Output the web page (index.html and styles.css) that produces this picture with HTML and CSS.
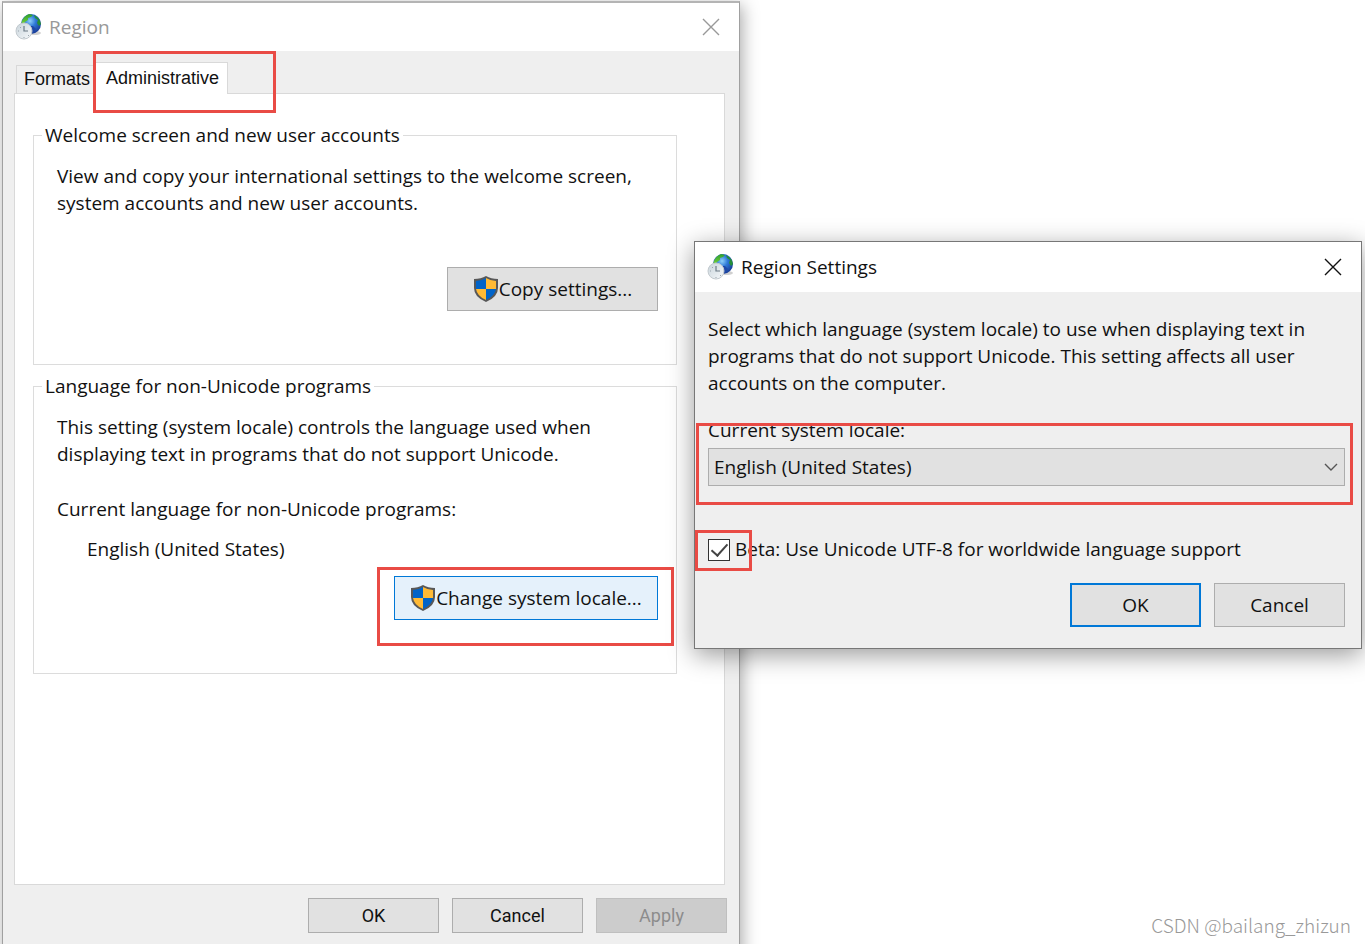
FILE: index.html
```html
<!DOCTYPE html>
<html lang="en">
<head>
  <meta charset="UTF-8" />
  <meta name="viewport" content="width=device-width, initial-scale=1.0" />
  <title>Region</title>
  <link rel="stylesheet" href="styles.css">
</head>
<body>
  <!-- shared icons -->
  <svg class="defs" aria-hidden="true">
    <defs>
      <radialGradient id="ocean" cx="0.45" cy="0.35" r="0.7">
        <stop offset="0" stop-color="#8fd0f8" />
        <stop offset="0.4" stop-color="#2f7ad8" />
        <stop offset="1" stop-color="#14318c" />
      </radialGradient>
      <linearGradient id="land" x1="0" y1="0" x2="0" y2="1">
        <stop offset="0" stop-color="#2f9e2c" />
        <stop offset="1" stop-color="#7ad63c" />
      </linearGradient>
      <linearGradient id="clock" x1="0" y1="0" x2="1" y2="1">
        <stop offset="0" stop-color="#c9d4db" />
        <stop offset="1" stop-color="#f6f9fb" />
      </linearGradient>
    </defs>
    <symbol id="globe" viewBox="0 0 28 28">
      <ellipse cx="19" cy="20" rx="7" ry="2" fill="#777" opacity="0.35" />
      <circle cx="16" cy="11" r="10" fill="url(#ocean)" />
      <path d="M7 8 Q9 3 14 1 L18 2 L16 4 L13 5 L13 7 L10 9 L9 11 L6 12 Z" fill="url(#land)" />
      <path d="M19 2 Q25 5 26 11 L24 13 L22 10 L23 7 L20 5 Z" fill="#268f37" />
      <path d="M13 13 L18 13 L21 16 L18 20 L15 18 Z" fill="#1f48a8" />
      <circle cx="9" cy="18" r="8" fill="url(#clock)" stroke="#c3cacf" />
      <path d="M9 13 V18 H13" fill="none" stroke="#6c7b86" stroke-width="1.2" />
      <path d="M3 18 H4 M9 24 V25 M5 14 L6 15 M13 22 L14 23" stroke="#9aa5ad" />
    </symbol>
    <symbol id="shield" viewBox="0 0 26 28">
      <path d="M13 1 Q18 4 25 4 V13 Q25 22 13 27 Q1 22 1 13 V4 Q8 4 13 1 Z" fill="#585858" />
      <path d="M13 3 Q8 6 3 6 V14 H13 Z" fill="#0063c8" />
      <path d="M13 3 Q18 6 23 6 V14 H13 Z" fill="#ffba35" />
      <path d="M3 14 H13 V25 Q4 21 3 14 Z" fill="#ffba35" />
      <path d="M23 14 H13 V25 Q22 21 23 14 Z" fill="#0063c8" />
    </symbol>
    <symbol id="close" viewBox="0 0 18 18">
      <path d="M1 1 L17 17 M17 1 L1 17" fill="none" stroke="currentColor" stroke-width="1.4" />
    </symbol>
  </svg>

  <main class="desktop">
    <section class="window region" aria-label="Region">
      <header class="titlebar inactive">
        <svg class="app-icon"><use href="#globe" /></svg>
        <h1>Region</h1>
        <button class="close" aria-label="Close"><svg><use href="#close" /></svg></button>
      </header>
      <div class="region-body">
        <div class="tabs" role="tablist">
          <button class="tab" role="tab">Formats</button>
          <div class="marked">
            <button class="tab active" role="tab" aria-selected="true">Administrative</button>
            <span class="mark mark-tab"></span>
          </div>
        </div>
        <div class="panel" role="tabpanel">
          <fieldset>
            <legend>Welcome screen and new user accounts</legend>
            <p>View and copy your international settings to the welcome screen,<br>system accounts and new user accounts.</p>
            <div class="action action-copy">
              <button class="btn shielded copy"><svg><use href="#shield" /></svg>Copy settings...</button>
            </div>
          </fieldset>
          <fieldset>
            <legend>Language for non-Unicode programs</legend>
            <p>This setting (system locale) controls the language used when<br>displaying text in programs that do not support Unicode.</p>
            <p class="current">Current language for non-Unicode programs:</p>
            <p class="value">English (United States)</p>
            <div class="action">
              <div class="marked">
                <button class="btn shielded change"><svg><use href="#shield" /></svg>Change system locale...</button>
                <span class="mark mark-change"></span>
              </div>
            </div>
          </fieldset>
        </div>
        <footer class="buttons">
          <button class="btn">OK</button>
          <button class="btn">Cancel</button>
          <button class="btn" disabled>Apply</button>
        </footer>
      </div>
    </section>

    <section class="window settings" role="dialog" aria-label="Region Settings">
      <header class="titlebar">
        <svg class="app-icon"><use href="#globe" /></svg>
        <h2>Region Settings</h2>
        <button class="close" aria-label="Close"><svg><use href="#close" /></svg></button>
      </header>
      <div class="settings-body">
        <p>Select which language (system locale) to use when displaying text in<br>programs that do not support Unicode. This setting affects all user<br>accounts on the computer.</p>
        <div class="locale marked">
          <label for="locale">Current system locale:</label>
          <div class="marked">
            <select id="locale">
              <option>English (United States)</option>
            </select>
            <svg class="chevron" viewBox="0 0 14 8"><path d="M1 1 L7 7 L13 1" fill="none" stroke="#555" stroke-width="1.4" /></svg>
          </div>
          <span class="mark mark-locale"></span>
        </div>
        <div class="beta marked">
          <input type="checkbox" id="beta" checked>
          <label for="beta">Beta: Use Unicode UTF-8 for worldwide language support</label>
          <span class="mark mark-beta"></span>
        </div>
        <div class="buttons">
          <button class="btn default">OK</button>
          <button class="btn">Cancel</button>
        </div>
      </div>
    </section>

    <div class="watermark">CSDN @bailang_zhizun</div>
  </main>
</body>
</html>
```
FILE: styles.css
```css
* {
  box-sizing: border-box;
}
body {
  margin: 0;
  background: #fff;
  color: #111;
  font-family: "Segoe UI", "Open Sans", "Noto Sans", sans-serif;
  font-size: 19px;
  line-height: 27px;
}
h1, h2, p {
  margin: 0;
  font-size: inherit;
  font-weight: normal;
}
button, select {
  font: inherit;
  color: inherit;
}
.defs {
  position: absolute;
  width: 0;
  height: 0;
}
.desktop {
  position: relative;
  height: 100vh;
  overflow: hidden;
}

/* windows */
.window {
  position: absolute;
  display: flex;
  flex-direction: column;
  background: #efefef;
  border: 1px solid #a0a0a0;
}
.region {
  top: 1px;
  left: 2px;
  right: 625px;
  min-height: 110vh;
  border-width: 2px 1px;
  border-color: #b4b4b4 #a0a0a0;
  box-shadow: 2px 4px 16px rgba(0, 0, 0, 0.35);
}
.settings {
  top: 241px;
  right: 3px;
  left: 694px;
  border: 1px solid #777;
  box-shadow: 0 6px 24px rgba(0, 0, 0, 0.4);
}
.titlebar {
  display: flex;
  align-items: center;
  gap: 6px;
  height: 50px;
  padding: 0 19px 0 12px;
  background: #fff;
}
.titlebar.inactive {
  height: 48px;
  color: #999;
}
.app-icon {
  width: 28px;
  height: 28px;
}
.close {
  display: flex;
  margin-left: auto;
  padding: 0;
  border: none;
  background: none;
}
.close svg {
  width: 18px;
  height: 18px;
}

/* tabs */
.region-body {
  padding: 11px 14px 0 11px;
}
.tabs {
  display: flex;
  align-items: flex-end;
  padding-left: 2px;
  font-family: "Liberation Sans", Arial, sans-serif;
  font-size: 18px;
}
.tab {
  height: 28px;
  padding: 0 0 0 7px;
  width: 79px;
  border: 1px solid #d9d9d9;
  border-bottom: none;
  background: #f0f0f0;
  text-align: left;
  line-height: 27px;
}
.tab.active {
  display: block;
  width: 133px;
  height: 32px;
  margin-bottom: -1px;
  padding: 0 10px;
  background: #fff;
}
.panel {
  height: 792px;
  padding: 28px 47px 0 18px;
  border: 1px solid #d9d9d9;
  background: #fff;
}
fieldset {
  min-width: 0;
  margin: 0 0 8px;
  padding: 14px 18px 53px 23px;
  border: 1px solid #dcdcdc;
}
legend {
  margin-left: -15px;
  padding: 0 3px;
}
.current {
  margin-top: 28px;
}
.value {
  margin-top: 13px;
  padding-left: 30px;
}
.action {
  display: flex;
  justify-content: flex-end;
  margin-top: 13px;
}
.action-copy {
  margin-top: 50px;
}

/* controls */
.btn {
  display: flex;
  align-items: center;
  justify-content: center;
  width: 131px;
  height: 44px;
  padding: 0;
  border: 1px solid #adadad;
  background: #e1e1e1;
}
.btn.default {
  border: 2px solid #0078d7;
}
.btn:disabled {
  border-color: #bfbfbf;
  background: #ccc;
  color: #8c8c8c;
}
.btn.copy {
  width: 211px;
}
.btn.change {
  width: 264px;
  border-color: #0078d7;
  background: #e5f1fb;
}
.shielded svg {
  width: 26px;
  height: 28px;
}
.buttons {
  display: flex;
  justify-content: flex-end;
  gap: 13px;
}
footer.buttons {
  margin-right: -2px;
  padding-top: 13px;
  font-family: Roboto, sans-serif;
  font-size: 18px;
}
footer .btn {
  height: 35px;
}

/* region settings dialog */
.settings-body {
  padding: 24px 16px 21px 13px;
}
.locale {
  margin-top: 20px;
}
.locale label {
  display: block;
  margin-bottom: 4px;
}
select {
  display: block;
  width: 100%;
  height: 38px;
  padding: 0 5px;
  border: 1px solid #adadad;
  border-radius: 0;
  background: #e1e1e1;
  appearance: none;
}
.chevron {
  position: absolute;
  top: 15px;
  right: 7px;
  width: 14px;
  height: 8px;
  pointer-events: none;
}
.beta {
  display: flex;
  align-items: center;
  gap: 5px;
  margin-top: 50px;
}
.beta input {
  display: flex;
  justify-content: center;
  width: 22px;
  height: 22px;
  margin: 0;
  border: 1px solid #333;
  background: #fff;
  appearance: none;
}
.beta input:checked::after {
  content: "";
  width: 7px;
  height: 14px;
  border: solid #444;
  border-width: 0 2px 2px 0;
  transform: rotate(42deg);
}
.settings-body .buttons {
  margin-top: 20px;
}

/* red highlight boxes */
.marked {
  position: relative;
}
.mark {
  position: absolute;
  border: 3px solid #e94b45;
  pointer-events: none;
}
.mark-tab {
  top: -11px;
  left: -2px;
  width: 183px;
  height: 62px;
}
.mark-change {
  inset: -9px -16px -26px -17px;
}
.mark-locale {
  inset: 6px -8px -19px -12px;
}
.mark-beta {
  top: -6px;
  left: -13px;
  width: 57px;
  height: 41px;
}

.watermark {
  position: absolute;
  right: 14px;
  bottom: 6px;
  color: #999;
  font-family: "Noto Sans CJK SC", sans-serif;
  font-weight: 300;
  font-size: 19px;
}
```
